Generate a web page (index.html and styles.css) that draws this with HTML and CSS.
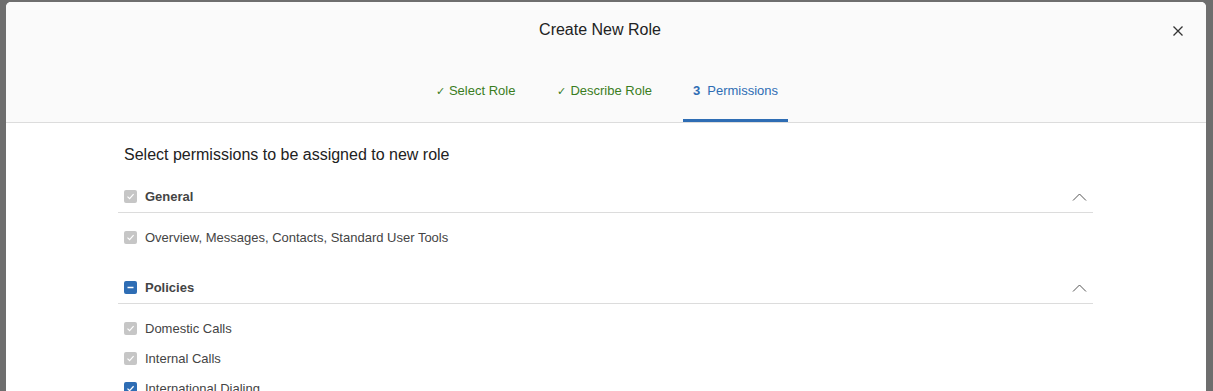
FILE: index.html
```html
<!DOCTYPE html>
<html>
<head>
    <title>Create New Role</title>
    <link rel="stylesheet" href="styles.css">
</head>
<body>
    <div class="modal">
        <!-- Header with title and wizard steps -->
        <div class="modal-header">
            <div class="modal-title">Create New Role</div>
            <button class="close-btn" aria-label="Close">
                <svg width="12" height="12" viewBox="0 0 12 12"><path d="M1.5 1.5L10.5 10.5M10.5 1.5L1.5 10.5" stroke="#333" stroke-width="1.3" fill="none"/></svg>
            </button>
            <div class="steps">
                <div class="step done"><span class="step-mark">&#10003;</span>Select Role</div>
                <div class="step done"><span class="step-mark">&#10003;</span>Describe Role</div>
                <div class="step active"><span class="step-num">3</span>Permissions</div>
            </div>
        </div>

        <!-- Permissions list -->
        <div class="modal-body">
            <div class="intro">Select permissions to be assigned to new role</div>

            <div class="section">
                <div class="section-head">
                    <span class="check grey">
                        <svg width="9" height="9" viewBox="0 0 9 9"><path d="M1.5 4.6L3.6 6.6L7.6 2.2" stroke="#fff" stroke-width="1.2" fill="none"/></svg>
                    </span>
                    <span class="section-title">General</span>
                    <svg class="chevron" width="15" height="8" viewBox="0 0 15 8"><path d="M1 7.5L7.5 1L14 7.5" stroke="#555" stroke-width="1" fill="none"/></svg>
                </div>
                <div class="items">
                    <div class="item">
                        <span class="check grey">
                            <svg width="9" height="9" viewBox="0 0 9 9"><path d="M1.5 4.6L3.6 6.6L7.6 2.2" stroke="#fff" stroke-width="1.2" fill="none"/></svg>
                        </span>
                        Overview, Messages, Contacts, Standard User Tools
                    </div>
                </div>
            </div>

            <div class="section">
                <div class="section-head">
                    <span class="check blue">
                        <svg width="9" height="9" viewBox="0 0 9 9"><path d="M1.5 4.5H7.5" stroke="#fff" stroke-width="1.5" fill="none"/></svg>
                    </span>
                    <span class="section-title">Policies</span>
                    <svg class="chevron" width="15" height="8" viewBox="0 0 15 8"><path d="M1 7.5L7.5 1L14 7.5" stroke="#555" stroke-width="1" fill="none"/></svg>
                </div>
                <div class="items">
                    <div class="item">
                        <span class="check grey">
                            <svg width="9" height="9" viewBox="0 0 9 9"><path d="M1.5 4.6L3.6 6.6L7.6 2.2" stroke="#fff" stroke-width="1.2" fill="none"/></svg>
                        </span>
                        Domestic Calls
                    </div>
                    <div class="item">
                        <span class="check grey">
                            <svg width="9" height="9" viewBox="0 0 9 9"><path d="M1.5 4.6L3.6 6.6L7.6 2.2" stroke="#fff" stroke-width="1.2" fill="none"/></svg>
                        </span>
                        Internal Calls
                    </div>
                    <div class="item">
                        <span class="check blue">
                            <svg width="9" height="9" viewBox="0 0 9 9"><path d="M1.5 4.6L3.6 6.6L7.6 2.2" stroke="#fff" stroke-width="1.3" fill="none"/></svg>
                        </span>
                        International Dialing
                    </div>
                </div>
            </div>
        </div>
    </div>
</body>
</html>
```

FILE: styles.css
```css
/* Dimmed page behind the dialog */
body {
    margin: 0;
    padding: 2px 7px 0 6px;
    background-color: #6e6e6e;
    font-family: "Liberation Sans", Arial, sans-serif;
    height: 389px;
    overflow: hidden;
}

.modal {
    background: #fff;
    border-radius: 5px 5px 0 0;
    overflow: hidden;
    height: 600px;
}

/* Header */
.modal-header {
    position: relative;
    background: #fafafa;
    border-bottom: 1px solid #dcdcdc;
    height: 120px;
    display: flex;
    flex-direction: column;
    align-items: center;
}

.modal-title {
    padding-top: 16px;
    margin-right: 12px;
    font-size: 16px;
    line-height: 24px;
    color: #222;
}

.close-btn {
    position: absolute;
    top: 21px;
    right: 20px;
    width: 16px;
    height: 16px;
    padding: 0;
    border: none;
    background: none;
    display: flex;
    align-items: center;
    justify-content: center;
    cursor: pointer;
}

/* Wizard steps */
.steps {
    display: flex;
    gap: 22px;
    margin-top: 31px;
    margin-left: 2px;
}

.step {
    padding: 10px 10px 20px;
    font-size: 13px;
    line-height: 16px;
    border-bottom: 3px solid transparent;
}

.step.done {
    color: #3a7d1e;
}

.step.active {
    margin-left: -1px;
    color: #2e6db4;
    border-bottom-color: #2e6db4;
}

.step-mark {
    font-size: 11px;
    margin-right: 4px;
}

.step-num {
    font-weight: bold;
    margin-right: 7px;
}

/* Body */
.modal-body {
    padding: 22px 113px 0 112px;
}

.intro {
    font-size: 16px;
    line-height: 20px;
    color: #222;
    padding-left: 6px;
    margin-bottom: 15px;
}

.section {
    margin-bottom: 19px;
}

.section-head {
    display: flex;
    align-items: center;
    height: 32px;
    padding: 0 6px;
    border-bottom: 1px solid #dcdcdc;
}

.section-title {
    font-size: 13px;
    font-weight: bold;
    color: #444;
}

.chevron {
    margin-left: auto;
    margin-top: 1px;
}

.items {
    padding-top: 9px;
}

.item {
    display: flex;
    align-items: center;
    height: 30px;
    padding-left: 6px;
    font-size: 13px;
    color: #444;
}

/* Checkbox boxes */
.check {
    width: 13px;
    height: 13px;
    border-radius: 2px;
    margin-right: 8px;
    display: flex;
    align-items: center;
    justify-content: center;
    flex-shrink: 0;
}

.check.grey {
    background: #c6c6c6;
}

.check.blue {
    background: #2e6db4;
}
```
